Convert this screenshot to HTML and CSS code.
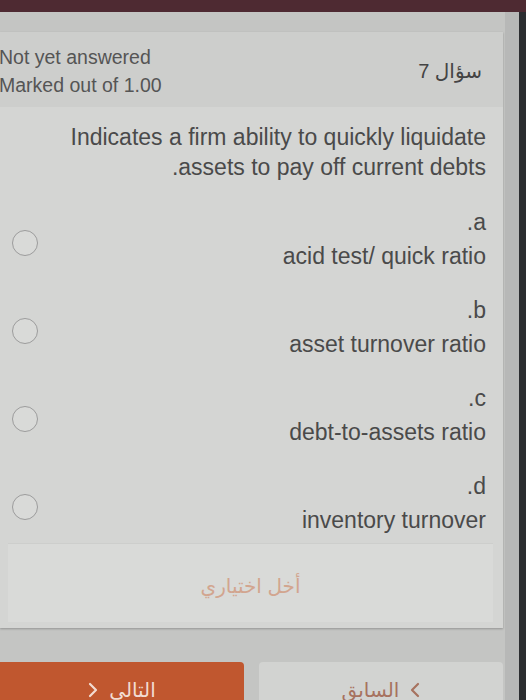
FILE: index.html
```html
<!DOCTYPE html>
<html lang="ar">
<head>
<meta charset="utf-8">
<link rel="stylesheet" href="styles.css">
</head>
<body>
<div class="topbar"></div>
<div class="screen">
  <div class="main">
    <div class="card">
      <div class="card-head">
        <div class="state">
          <div>Not yet answered</div>
          <div>Marked out of 1.00</div>
        </div>
        <div class="qno" dir="rtl">سؤال 7</div>
      </div>
      <div class="card-body">
        <div class="qtext" dir="rtl">Indicates a firm ability to quickly liquidate<br>assets to pay off current debts.</div>
        <div class="options">
          <div class="option">
            <span class="radio"></span>
            <div class="opt-text" dir="rtl"><div class="letter">a.</div><div class="answer">acid test/ quick ratio</div></div>
          </div>
          <div class="option">
            <span class="radio"></span>
            <div class="opt-text" dir="rtl"><div class="letter">b.</div><div class="answer">asset turnover ratio</div></div>
          </div>
          <div class="option">
            <span class="radio"></span>
            <div class="opt-text" dir="rtl"><div class="letter">c.</div><div class="answer">debt-to-assets ratio</div></div>
          </div>
          <div class="option">
            <span class="radio"></span>
            <div class="opt-text" dir="rtl"><div class="letter">d.</div><div class="answer">inventory turnover</div></div>
          </div>
        </div>
        <div class="clear" dir="rtl">أخل اختياري</div>
      </div>
    </div>
    <div class="nav">
      <div class="btn btn-next">
        <svg class="chev" width="10" height="16" viewBox="0 0 10 16"><path d="M2 2 L8 8 L2 14" fill="none" stroke="currentColor" stroke-width="2.2" stroke-linecap="round" stroke-linejoin="round"/></svg>
        <span dir="rtl">التالي</span>
      </div>
      <div class="btn btn-prev">
        <span dir="rtl">السابق</span>
        <svg class="chev" width="10" height="16" viewBox="0 0 10 16"><path d="M8 2 L2 8 L8 14" fill="none" stroke="currentColor" stroke-width="2.2" stroke-linecap="round" stroke-linejoin="round"/></svg>
      </div>
    </div>
  </div>
  <div class="bezel-light"></div>
  <div class="bezel-dark"></div>
</div>
</body>
</html>
```
FILE: styles.css
```css
html, body {
  margin: 0;
  padding: 0;
}
body {
  width: 526px;
  height: 700px;
  overflow: hidden;
  background: #c4c5c3;
  font-family: "Liberation Sans", "DejaVu Sans", sans-serif;
  color: #4b4b4b;
}
.topbar {
  height: 12px;
  background: #4e2a32;
}
.screen {
  display: flex;
  height: 688px;
}
.main {
  width: 505px;
  padding-top: 20px;
  box-sizing: border-box;
}
.bezel-light {
  width: 14px;
  background: #b7b8b7;
}
.bezel-dark {
  width: 7px;
  background: #2b2d30;
}
.card {
  width: 503px;
  background: #d4d5d3;
  box-shadow: 0 1px 2px rgba(0,0,0,0.25);
}
.card-head {
  height: 75px;
  display: flex;
  justify-content: space-between;
  align-items: center;
  padding: 0 21px 0 0;
  background: #cdcecc;
  box-sizing: border-box;
}
.state {
  margin-left: -1px;
  font-size: 19.5px;
  line-height: 28px;
  color: #555;
  padding-top: 2px;
}
.qno {
  font-size: 20px;
  color: #444;
  margin-top: 2px;
}
.card-body {
  padding: 15px 17px 6px 0;
}
.qtext {
  font-size: 23px;
  line-height: 30px;
  text-align: right;
  color: #4a4a4a;
}
.options {
  margin-top: 25px;
  display: flex;
  flex-direction: column;
  gap: 24px;
}
.option {
  display: flex;
  justify-content: space-between;
  align-items: center;
}
.radio {
  width: 24px;
  height: 24px;
  border: 1.5px solid #9c9c9c;
  border-radius: 50%;
  margin-left: 12px;
  margin-top: 8px;
  background: #d9dad8;
}
.opt-text {
  text-align: right;
  font-size: 23px;
  color: #4a4a4a;
}
.letter, .answer {
  line-height: 30px;
}
.answer {
  margin-top: 4px;
}
.clear {
  margin: 8px -7px 0 8px;
  height: 79px;
  display: flex;
  align-items: center;
  justify-content: center;
  padding-top: 6px;
  box-sizing: border-box;
  background: #d9dad8;
  border-top: 1px solid #cdcecc;
  font-size: 20px;
  color: #d2a58f;
}
.nav {
  margin-top: 34px;
  display: flex;
  gap: 15px;
  width: 503px;
}
.btn {
  flex: 1;
  height: 56px;
  display: flex;
  align-items: center;
  justify-content: center;
  gap: 11px;
  font-size: 20px;
  box-sizing: border-box;
  border-radius: 0 4px 0 0;
}
.btn-next {
  background: #c0572f;
  color: #f2dcd2;
}
.btn-prev {
  background: #d2d3d1;
  color: #a7725f;
  border-radius: 4px 4px 0 0;
}
.chev {
  display: block;
}
```
